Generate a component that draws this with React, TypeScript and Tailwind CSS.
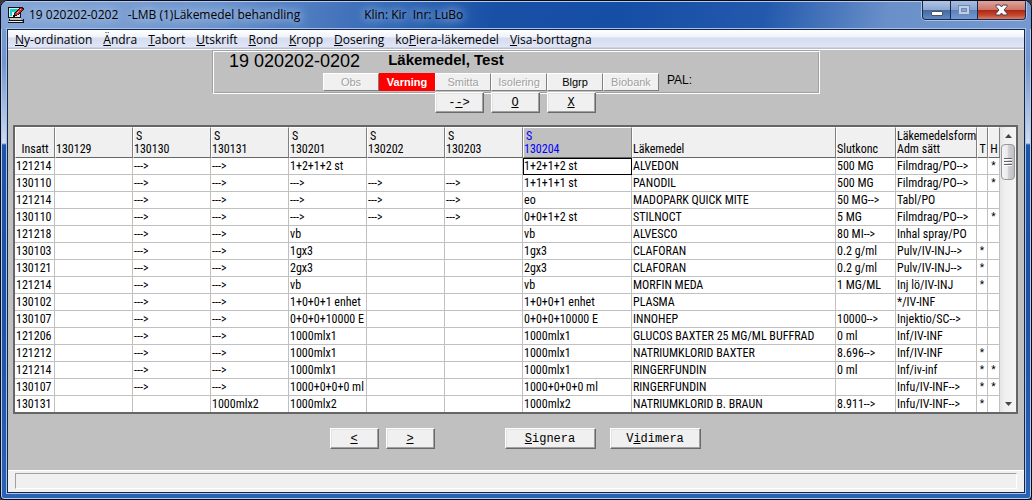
import { useState } from "react";
import clsx from "clsx";

const menuItems = [
  ["", "N", "y-ordination"],
  ["", "Ä", "ndra"],
  ["", "T", "abort"],
  ["", "U", "tskrift"],
  ["", "R", "ond"],
  ["", "K", "ropp"],
  ["", "D", "osering"],
  ["ko", "P", "iera-läkemedel"],
  ["", "V", "isa-borttagna"],
];

const flags = [
  { label: "Obs", state: "off" },
  { label: "Varning", state: "alert" },
  { label: "Smitta", state: "off" },
  { label: "Isolering", state: "off" },
  { label: "Blgrp", state: "on" },
  { label: "Biobank", state: "off" },
];

const columns = [
  { top: "", label: "Insatt", width: "w-[40px]", center: true },
  { top: "", label: "130129", width: "w-[78px]" },
  { top: "S", label: "130130", width: "w-[78px]" },
  { top: "S", label: "130131", width: "w-[78px]" },
  { top: "S", label: "130201", width: "w-[78px]" },
  { top: "S", label: "130202", width: "w-[78px]" },
  { top: "S", label: "130203", width: "w-[78px]" },
  { top: "S", label: "130204", width: "w-[109px]", current: true },
  { top: "", label: "Läkemedel", width: "" },
  { top: "", label: "Slutkonc", width: "w-[60px]" },
  { top: "Läkemedelsform", label: "Adm sätt", width: "w-[81px]" },
  { top: "", label: "T", width: "w-[11px]", center: true },
  { top: "", label: "H", width: "w-[12px]", center: true },
];

const A = "--->";

const rows = [
  ["121214", "", A, A, "1+2+1+2 st", "", "", "1+2+1+2 st", "ALVEDON", "500 MG", "Filmdrag/PO-->", "", "*"],
  ["130110", "", A, A, A, A, A, "1+1+1+1 st", "PANODIL", "500 MG", "Filmdrag/PO-->", "", "*"],
  ["121214", "", A, A, A, A, A, "eo", "MADOPARK QUICK MITE", "50 MG-->", "Tabl/PO", "", ""],
  ["130110", "", A, A, A, A, A, "0+0+1+2 st", "STILNOCT", "5 MG", "Filmdrag/PO-->", "", "*"],
  ["121218", "", A, A, "vb", "", "", "vb", "ALVESCO", "80 MI-->", "Inhal spray/PO", "", ""],
  ["130103", "", A, A, "1gx3", "", "", "1gx3", "CLAFORAN", "0.2 g/ml", "Pulv/IV-INJ-->", "*", ""],
  ["130121", "", A, A, "2gx3", "", "", "2gx3", "CLAFORAN", "0.2 g/ml", "Pulv/IV-INJ-->", "*", ""],
  ["121214", "", A, A, "vb", "", "", "vb", "MORFIN MEDA", "1 MG/ML", "Inj lö/IV-INJ", "*", ""],
  ["130102", "", A, A, "1+0+0+1 enhet", "", "", "1+0+0+1 enhet", "PLASMA", "", "*/IV-INF", "", ""],
  ["130107", "", A, A, "0+0+0+10000 E", "", "", "0+0+0+10000 E", "INNOHEP", "10000-->", "Injektio/SC-->", "", ""],
  ["121206", "", A, A, "1000mlx1", "", "", "1000mlx1", "GLUCOS BAXTER 25 MG/ML BUFFRAD", "0 ml", "Inf/IV-INF", "", ""],
  ["121212", "", A, A, "1000mlx1", "", "", "1000mlx1", "NATRIUMKLORID BAXTER", "8.696-->", "Inf/IV-INF", "*", ""],
  ["121214", "", A, A, "1000mlx1", "", "", "1000mlx1", "RINGERFUNDIN", "0 ml", "Inf/iv-inf", "*", "*"],
  ["130107", "", A, A, "1000+0+0+0 ml", "", "", "1000+0+0+0 ml", "RINGERFUNDIN", "", "Infu/IV-INF-->", "*", "*"],
  ["130131", "", "", "1000mlx2", "1000mlx2", "", "", "1000mlx2", "NATRIUMKLORID B. BRAUN", "8.911-->", "Infu/IV-INF-->", "*", ""],
];

export default function App() {
  const [selected, setSelected] = useState("0-7");

  return (
    <div className="min-h-screen flex flex-col bg-[#3a3a40] text-black">
      <div className="flex-1 flex flex-col rounded-t-lg rounded-b-sm border border-[#070b1c] px-[6px] pb-[6px] bg-[linear-gradient(to_bottom,#7fa0d3_0px,#7094cc_60px,#cddcf0_142px,#1d55a8_144px,#1b50a2_300px,#2a62b6_100%)] shadow-[inset_0_0_0_1px_#b4cbea] overflow-hidden">
        <TitleBar />
        <div className="flex-1 flex flex-col border border-[#10244d] bg-[#c0c0c0] shadow-[0_0_0_1px_#a9c2e6]">
          <nav className="h-5 flex items-center gap-[11px] px-[7px] border-b border-white bg-[linear-gradient(to_bottom,#ffffff_0px,#f0f3fa_7px,#d5dcef_8px,#e0e6f5_17px,#b9c0d3_18px)] font-['Open_Sans',sans-serif] text-[12px] leading-4 whitespace-nowrap">
            {menuItems.map(([pre, key, post]) => (
              <button key={key} type="button" className="hover:text-blue-800">
                {pre}
                <u>{key}</u>
                {post}
              </button>
            ))}
          </nav>

          <PatientHeader />

          {/* step through the days */}
          <div className="-mt-0.5 flex justify-center gap-[7px] pr-0.5">
            <PushButton label="-->" hotkey={1} />
            <PushButton label="O" hotkey={0} />
            <PushButton label="X" hotkey={0} />
          </div>

          <div className="mt-3 ml-[5px] mr-[6px] flex border-2 border-[#666666] bg-[#f0f0f0]">
            <div className="flex-1 min-w-0">
              <table className="w-full table-fixed border-separate border-spacing-0 bg-white font-['Roboto_Condensed','Liberation_Sans',sans-serif] text-[12px] leading-4">
                <colgroup>
                  {columns.map((col, i) => (
                    <col key={i} className={col.width} />
                  ))}
                </colgroup>
                <thead>
                  <tr className="h-[31px]">
                    {columns.map((col, i) => (
                      <th
                        key={i}
                        scope="col"
                        className={clsx(
                          "p-0 align-bottom font-normal leading-[13px] whitespace-nowrap border-r border-b border-r-[#808080] border-b-[#666666] border-t border-l border-t-white border-l-white",
                          col.center ? "text-center" : "text-left",
                          col.current ? "bg-[#c0c0c0] text-[#0000ff]" : "bg-[#f0f0f0]"
                        )}
                      >
                        <div className={col.top === "S" && "pl-0.5"}>{col.top}</div>
                        <div className="pb-px">{col.label}</div>
                      </th>
                    ))}
                  </tr>
                </thead>
                <tbody>
                  {rows.map((row, r) => (
                    <tr key={r} className="group">
                      {row.map((value, c) => {
                        const id = `${r}-${c}`;
                        return (
                          <td
                            key={c}
                            onClick={() => setSelected(id)}
                            className={clsx(
                              "h-[17px] group-last:h-4 py-0 pr-0 border-r border-b group-last:border-b-0 border-[#c0c0c0] whitespace-nowrap",
                              c > 10 ? "pl-0 text-center text-[10px]" : "pl-px",
                              selected === id && "outline outline-black -outline-offset-1"
                            )}
                          >
                            {value}
                          </td>
                        );
                      })}
                    </tr>
                  ))}
                </tbody>
              </table>
            </div>
            <ScrollBar />
          </div>

          <div className="mt-[14px] flex justify-center pr-0.5">
            <div className="flex gap-[7px]">
              <PushButton label="<" hotkey={0} />
              <PushButton label=">" hotkey={0} />
            </div>
            <div className="ml-[70px] flex gap-[14px]">
              <PushButton label="Signera" hotkey={0} wide />
              <PushButton label="Vidimera" hotkey={1} wide />
            </div>
          </div>

          <div className="mt-auto border-t border-white bg-[#f0f0f0] pt-0.5 pb-[3px] px-[7px]">
            <div className="h-4 border border-t-[#a0a0a0] border-l-[#a0a0a0] border-r-white border-b-white" />
          </div>
        </div>
      </div>
    </div>
  );
}

function TitleBar() {
  return (
    <header className="h-7 -mx-[6px] pl-[7px] pr-[5px] flex items-start justify-between bg-[linear-gradient(100deg,#86a6d6_0%,#6f95cd_20%,#3a6cb8_36%,#1850a6_48%,#154ea5_60%,#2359ad_74%,#6a90c9_86%,#7599cf_100%)] shadow-[inset_0_1px_0_#b4cbea] font-['Open_Sans',sans-serif] text-[12px]">
      <div className="h-7 flex items-center">
        <AppIcon />
        <h1 className="ml-[5px] whitespace-pre leading-5 [text-shadow:0_0_8px_#c8daf2,0_0_12px_#a9c4e8]">
          19 020202-0202   -LMB (1)Läkemedel behandling
        </h1>
        <span className="ml-16 whitespace-pre leading-5 [text-shadow:0_0_8px_#a9c4e8,0_0_12px_#8fb0df,0_0_16px_#8fb0df]">
          Klin: Kir  Inr: LuBo
        </span>
      </div>
      <div className="flex h-[19px] rounded-b border border-t-0 border-[#16294f] shadow-[0_0_0_1px_#a9c2e6]">
        <button type="button" aria-label="Minimera" className="w-7 flex items-center justify-center border-r border-[#16294f] rounded-bl bg-[linear-gradient(to_bottom,#b3c6e2_0%,#8ba8d3_48%,#44689f_50%,#6389c4_100%)]">
          <svg width="12" height="14" viewBox="0 0 12 14">
            <rect x="0.5" y="8.5" width="11" height="4" rx="0.5" fill="#fff" stroke="#4a5265" />
          </svg>
        </button>
        <button type="button" aria-label="Maximera" disabled className="w-[27px] flex items-center justify-center border-r border-[#16294f] bg-[linear-gradient(to_bottom,#a9bedf_0%,#85a3d0_48%,#587fbb_50%,#769ad0_100%)]">
          <svg width="12" height="10" viewBox="0 0 12 10">
            <rect x="0.5" y="0.5" width="11" height="9" fill="#c0cfe6" stroke="#7189b3" />
            <rect x="3.5" y="3.5" width="5" height="3" fill="#86a3cf" stroke="#7189b3" />
          </svg>
        </button>
        <button type="button" aria-label="Stäng" className="w-[47px] flex items-center justify-center rounded-br bg-[linear-gradient(to_bottom,#dfa59c_0%,#cf7468_48%,#a92512_50%,#c64a31_80%,#d9806a_100%)]">
          <svg width="13" height="12" viewBox="0 0 13 12">
            <path d="M1 1h4l1.5 2L8 1h4v1.5L9 6l3 3.5V11H8L6.5 9 5 11H1V9.5L4 6 1 2.5z" fill="#fff" stroke="#4d4253" strokeLinejoin="round" />
          </svg>
        </button>
      </div>
    </header>
  );
}

// Small computer with a red pen across the screen
function AppIcon() {
  return (
    <svg width="16" height="16" viewBox="0 0 16 16" shapeRendering="crispEdges" aria-hidden="true">
      <path d="M1 1h11v9H1z" fill="#e8e8e8" />
      <path d="M2 2h9v7H2z" fill="#10d0d0" />
      <path d="M4 5h2v4H4zM7 7h4v2H7z" fill="#e8ffff" />
      <path d="M0 0h1v11H0zM1 0h11v1H1zM1 10h12v1H1zM12 6h1v5h-1z" fill="#111" />
      <path d="M2 11h11v2H2z" fill="#c8c8c8" />
      <path d="M1 12h1v2H1zM2 13h13v1H2zM0 15h15v1H0zM15 12h1v4h-1z" fill="#111" />
      <path d="M1 14h13v1H1z" fill="#f0f0f0" />
      <path d="M5 9V8h1V6h1V5h1V4h1V3h1V2h1V1h1V0h3v1h1v2h-1v1h-1v1h-1v1h-1v1h-1v1H9v1H7v1H5z" fill="#111" />
      <path d="M7 8V6h1V5h1V4h1V3h1V2h1V1h2v1h1v1h-1v1h-1v1h-1v1h-1v1h-1v1z" fill="#d82020" />
      <path d="M9 5h1v1H9zM10 4h1v1h-1zM12 2h1v1h-1z" fill="#ffb8b8" />
    </svg>
  );
}

function PatientHeader() {
  return (
    <section className="self-center w-[608px] max-w-full h-[44px] font-['Liberation_Sans',sans-serif] border border-t-[#a0a0a0] border-l-[#a0a0a0] border-r-white border-b-white shadow-[inset_1px_1px_0_#fff,inset_-1px_-1px_0_#a0a0a0]">
      <div className="flex items-start pl-4 h-[22px]">
        <span className="text-[18px] leading-5">19 020202-0202</span>
        <strong className="ml-7 text-[15px] leading-[18px]">Läkemedel, Test</strong>
      </div>
      <div className="flex items-start pl-[110px]">
        {flags.map((flag) => (
          <button
            key={flag.label}
            type="button"
            disabled={flag.state === "off"}
            className={clsx(
              "w-14 h-[18px] text-[11px] leading-4 border",
              flag.state === "alert"
                ? "bg-[#ff0000] text-white font-bold border-[#ff0000]"
                : "bg-[#f0f0f0] border-t-white border-l-white border-r-[#808080] border-b-[#808080]",
              flag.state === "off" && "text-[#a0a0a0] [text-shadow:1px_1px_0_#fff]"
            )}
          >
            {flag.label}
          </button>
        ))}
        <span className="ml-2 text-[12px] leading-[14px]">PAL:</span>
      </div>
    </section>
  );
}

function PushButton({ label, hotkey, wide }: { label: string; hotkey: number; wide?: boolean }) {
  return (
    <button
      type="button"
      className={clsx(
        "h-[21px] bg-[#f0f0f0] border border-t-white border-l-white border-r-[#696969] border-b-[#696969] shadow-[inset_-1px_-1px_0_#a0a0a0,inset_1px_1px_0_#e3e3e3] font-['Liberation_Mono',monospace] text-[12px] leading-[18px]",
        wide ? "w-[91px]" : "w-[49px]"
      )}
    >
      {label.slice(0, hotkey)}
      <u>{label[hotkey]}</u>
      {label.slice(hotkey + 1)}
    </button>
  );
}

function ScrollBar() {
  return (
    <div className="w-4 flex flex-col items-center bg-[linear-gradient(to_right,#e4e4e4,#f0f0f0_30%,#f4f4f4)]">
      <button type="button" aria-label="Uppåt" className="h-[17px] w-full flex items-center justify-center">
        <svg width="7" height="4" viewBox="0 0 7 4">
          <path d="M3.5 0L7 4H0z" fill="#454545" />
        </svg>
      </button>
      <div className="w-[14px] h-9 flex flex-col items-center justify-center gap-px rounded-sm border border-[#979797] bg-[linear-gradient(to_right,#f5f5f5,#e9e9eb_45%,#d0d0d4_55%,#c0c0c4)]">
        <span className="w-2 h-0.5 border-t border-[#606060] bg-white" />
        <span className="w-2 h-0.5 border-t border-[#606060] bg-white" />
        <span className="w-2 h-0.5 border-t border-[#606060] bg-white" />
      </div>
      <button type="button" aria-label="Nedåt" className="mt-auto h-[17px] w-full flex items-center justify-center">
        <svg width="7" height="4" viewBox="0 0 7 4">
          <path d="M0 0h7L3.5 4z" fill="#454545" />
        </svg>
      </button>
    </div>
  );
}
